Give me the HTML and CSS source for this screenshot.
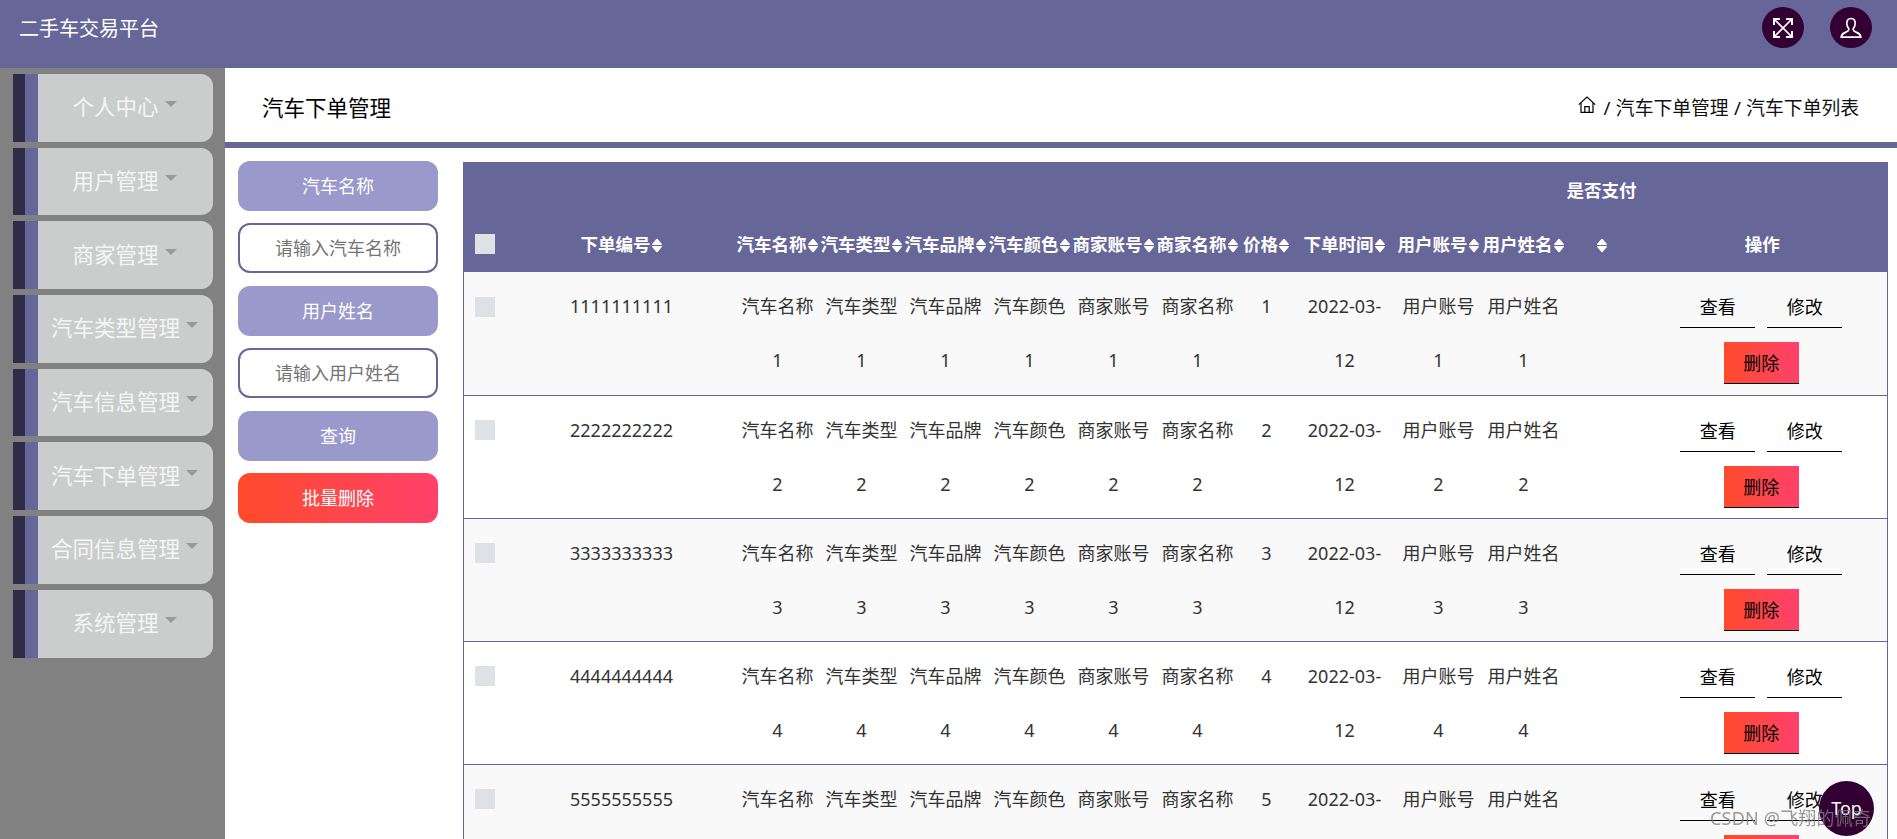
FILE: index.html
```html
<!DOCTYPE html>
<html lang="zh-CN">
<head>
    <meta charset="UTF-8">
    <title>二手车交易平台</title>
    <link rel="stylesheet" href="styles.css">
</head>
<body>
    <svg class="defs" aria-hidden="true">
        <symbol id="sort" viewBox="0 0 12 15">
            <path d="M1 6.2 L5.3 1 Q6 .4 6.7 1 L11 6.2 Q11.4 7 10.4 7 H1.6 Q.6 7 1 6.2Z"/>
            <path d="M1 8.8 L5.3 14 Q6 14.6 6.7 14 L11 8.8 Q11.4 8 10.4 8 H1.6 Q.6 8 1 8.8Z"/>
        </symbol>
    </svg>

    <!-- 顶部 -->
    <header class="topbar">
        <div class="site-title">二手车交易平台</div>
        <div class="top-btns">
            <a class="round-btn">
                <svg viewBox="0 0 20 20" width="20" height="20" fill="none" stroke="#fff" stroke-width="1.7">
                    <path d="M1.5 1.5 L18.5 18.5 M18.5 1.5 L1.5 18.5"/>
                    <path d="M1 7 V1 H7 M13 1 H19 V7 M19 13 V19 H13 M7 19 H1 V13" stroke-width="2"/>
                </svg>
            </a>
            <a class="round-btn">
                <svg viewBox="0 0 22 22" width="22" height="22" fill="none" stroke="#fff" stroke-width="1.7">
                    <path d="M11 1.5 C7.8 1.5 6.6 4 6.8 6.8 C7 9.2 8 10.8 8.8 11.8 C9.2 13.4 7.6 14.6 5 15.6 C2.8 16.4 1.5 17.6 1.2 20.2 H20.8 C20.5 17.6 19.2 16.4 17 15.6 C14.4 14.6 12.8 13.4 13.2 11.8 C14 10.8 15 9.2 15.2 6.8 C15.4 4 14.2 1.5 11 1.5Z"/>
                </svg>
            </a>
        </div>
    </header>

    <div class="layout">
        <!-- 左侧菜单 -->
        <aside class="sidebar">
            <div class="menu-item"><span class="menu-text">个人中心</span><i class="caret"></i></div>
            <div class="menu-item"><span class="menu-text">用户管理</span><i class="caret"></i></div>
            <div class="menu-item"><span class="menu-text">商家管理</span><i class="caret"></i></div>
            <div class="menu-item"><span class="menu-text">汽车类型管理</span><i class="caret"></i></div>
            <div class="menu-item"><span class="menu-text">汽车信息管理</span><i class="caret"></i></div>
            <div class="menu-item"><span class="menu-text">汽车下单管理</span><i class="caret"></i></div>
            <div class="menu-item"><span class="menu-text">合同信息管理</span><i class="caret"></i></div>
            <div class="menu-item"><span class="menu-text">系统管理</span><i class="caret"></i></div>
        </aside>

        <main class="main">
            <div class="crumb-bar">
                <div class="page-title">汽车下单管理</div>
                <div class="crumbs">
                    <svg class="home" viewBox="0 0 18 18" width="18" height="18" fill="none" stroke="#000" stroke-width="1.2">
                        <path d="M.8 8.6 L9 1 L17.2 8.6"/>
                        <path d="M3 7 V16.4 H15 V7"/>
                        <path d="M6.8 16.4 V10.6 H11.2 V16.4"/>
                    </svg>
                    <span>/ 汽车下单管理 / 汽车下单列表</span>
                </div>
            </div>

            <div class="content">
                <!-- 查询条件 -->
                <div class="search">
                    <div class="search-btn">汽车名称</div>
                    <input class="search-input" type="text" placeholder="请输入汽车名称">
                    <div class="search-btn">用户姓名</div>
                    <input class="search-input" type="text" placeholder="请输入用户姓名">
                    <div class="search-btn">查询</div>
                    <div class="search-btn danger">批量删除</div>
                </div>

                <!-- 列表 -->
                <table class="list">
                    <colgroup>
                        <col class="c-check"><col class="c-no">
                        <col class="c-84"><col class="c-84"><col class="c-84"><col class="c-84"><col class="c-84"><col class="c-84">
                        <col class="c-price"><col class="c-time"><col class="c-user"><col class="c-84"><col class="c-pay"><col class="c-op">
                    </colgroup>
                    <thead>
                        <tr>
                            <th class="check-cell"><i class="check"></i></th>
                            <th>下单编号<svg class="sort"><use href="#sort"/></svg></th>
                            <th>汽车名称<svg class="sort"><use href="#sort"/></svg></th>
                            <th>汽车类型<svg class="sort"><use href="#sort"/></svg></th>
                            <th>汽车品牌<svg class="sort"><use href="#sort"/></svg></th>
                            <th>汽车颜色<svg class="sort"><use href="#sort"/></svg></th>
                            <th>商家账号<svg class="sort"><use href="#sort"/></svg></th>
                            <th>商家名称<svg class="sort"><use href="#sort"/></svg></th>
                            <th>价格<svg class="sort"><use href="#sort"/></svg></th>
                            <th>下单时间<svg class="sort"><use href="#sort"/></svg></th>
                            <th>用户账号<svg class="sort"><use href="#sort"/></svg></th>
                            <th>用户姓名<svg class="sort"><use href="#sort"/></svg></th>
                            <th class="pay">是否支付<br><svg class="sort"><use href="#sort"/></svg></th>
                            <th>操作</th>
                        </tr>
                    </thead>
                    <tbody>
                        <tr>
                            <td class="check-cell"><i class="check"></i></td>
                            <td>1111111111</td>
                            <td>汽车名称<br>1</td><td>汽车类型<br>1</td><td>汽车品牌<br>1</td><td>汽车颜色<br>1</td>
                            <td>商家账号<br>1</td><td>商家名称<br>1</td><td>1</td><td>2022-03-<br>12</td>
                            <td>用户账号<br>1</td><td>用户姓名<br>1</td><td></td>
                            <td class="ops"><div class="op-list"><a class="op">查看</a><a class="op">修改</a><a class="op del">删除</a></div></td>
                        </tr>
                        <tr>
                            <td class="check-cell"><i class="check"></i></td>
                            <td>2222222222</td>
                            <td>汽车名称<br>2</td><td>汽车类型<br>2</td><td>汽车品牌<br>2</td><td>汽车颜色<br>2</td>
                            <td>商家账号<br>2</td><td>商家名称<br>2</td><td>2</td><td>2022-03-<br>12</td>
                            <td>用户账号<br>2</td><td>用户姓名<br>2</td><td></td>
                            <td class="ops"><div class="op-list"><a class="op">查看</a><a class="op">修改</a><a class="op del">删除</a></div></td>
                        </tr>
                        <tr>
                            <td class="check-cell"><i class="check"></i></td>
                            <td>3333333333</td>
                            <td>汽车名称<br>3</td><td>汽车类型<br>3</td><td>汽车品牌<br>3</td><td>汽车颜色<br>3</td>
                            <td>商家账号<br>3</td><td>商家名称<br>3</td><td>3</td><td>2022-03-<br>12</td>
                            <td>用户账号<br>3</td><td>用户姓名<br>3</td><td></td>
                            <td class="ops"><div class="op-list"><a class="op">查看</a><a class="op">修改</a><a class="op del">删除</a></div></td>
                        </tr>
                        <tr>
                            <td class="check-cell"><i class="check"></i></td>
                            <td>4444444444</td>
                            <td>汽车名称<br>4</td><td>汽车类型<br>4</td><td>汽车品牌<br>4</td><td>汽车颜色<br>4</td>
                            <td>商家账号<br>4</td><td>商家名称<br>4</td><td>4</td><td>2022-03-<br>12</td>
                            <td>用户账号<br>4</td><td>用户姓名<br>4</td><td></td>
                            <td class="ops"><div class="op-list"><a class="op">查看</a><a class="op">修改</a><a class="op del">删除</a></div></td>
                        </tr>
                        <tr>
                            <td class="check-cell"><i class="check"></i></td>
                            <td>5555555555</td>
                            <td>汽车名称<br>5</td><td>汽车类型<br>5</td><td>汽车品牌<br>5</td><td>汽车颜色<br>5</td>
                            <td>商家账号<br>5</td><td>商家名称<br>5</td><td>5</td><td>2022-03-<br>12</td>
                            <td>用户账号<br>5</td><td>用户姓名<br>5</td><td></td>
                            <td class="ops"><div class="op-list"><a class="op">查看</a><a class="op">修改</a><a class="op del">删除</a></div></td>
                        </tr>
                    </tbody>
                </table>
            </div>
        </main>
    </div>

    <a class="to-top">Top</a>
    <div class="watermark">CSDN @飞翔的佩奇</div>
</body>
</html>
```

FILE: styles.css
```css
*{
    margin: 0;
    padding: 0;
    box-sizing: border-box;
}
html,body{
    height: 100%;
    overflow: hidden;
}
body{
    font-family: "Noto Sans", "Noto Sans CJK SC", sans-serif;
    font-size: 18px;
    color: #333;
    background-color: #fff;
}
.defs{
    display: none;
}

/* 顶部 */
.topbar{
    height: 68px;
    background-color: #666699;
    display: flex;
    justify-content: space-between;
    padding: 7px 25px 0 19px;
}
.site-title{
    color: #fff;
    font-size: 20px;
    line-height: 44px;
}
.top-btns{
    display: flex;
    gap: 26px;
}
.round-btn{
    width: 42px;
    height: 41px;
    border-radius: 50%;
    background-color: #330033;
    display: flex;
    align-items: center;
    justify-content: center;
}

.layout{
    display: flex;
    height: 771px;
}

/* 左侧菜单 */
.sidebar{
    width: 225px;
    flex-shrink: 0;
    background-color: #808180;
    padding: 6px 12px 0 13px;
    display: flex;
    flex-direction: column;
    gap: 6px;
}
.menu-item{
    height: 67.7px;
    display: flex;
    align-items: center;
    justify-content: center;
    gap: 6px;
    padding-left: 11px;
    padding-bottom: 4px;
    background-color: #cbcdcc;
    border-left: 12px solid #2e2d47;
    border-radius: 0 12px 12px 0;
    position: relative;
}
.menu-item::before{
    content: "";
    position: absolute;
    left: 0;
    top: 0;
    bottom: 0;
    width: 13px;
    background-color: #666699;
}
.menu-text{
    color: #f5f5f5;
    font-size: 21.5px;
}
.caret{
    width: 0;
    height: 0;
    border-left: 6px solid transparent;
    border-right: 6px solid transparent;
    border-top: 6px solid #999;
    margin-bottom: 3px;
}

.main{
    flex: 1;
    min-width: 0;
}
.crumb-bar{
    height: 80px;
    border-bottom: 6px solid #666699;
    display: flex;
    justify-content: space-between;
    align-items: center;
    padding: 3px 38px 0 37px;
}
.page-title{
    font-size: 21.5px;
    color: #000;
}
.crumbs{
    display: flex;
    align-items: center;
    gap: 8px;
    font-size: 18.8px;
    word-spacing: 0.5px;
    color: #111;
}
.home{
    margin-bottom: 4px;
}

.content{
    display: flex;
    gap: 25px;
    padding: 13px 10px 0 13px;
}

/* 查询 */
.search{
    width: 200px;
    flex-shrink: 0;
    display: flex;
    flex-direction: column;
    gap: 12.4px;
}
.search-btn{
    height: 50px;
    line-height: 50px;
    text-align: center;
    color: #fff;
    background-color: #9999cc;
    border-radius: 12px;
}
.search-btn.danger{
    background: linear-gradient(to right, #ff4b2b, #ff416c);
}
.search-input{
    height: 50px;
    border: 2px solid #666699;
    border-radius: 12px;
    text-align: center;
    font: inherit;
    outline: none;
}
.search-input::placeholder{
    color: #757575;
}

/* 列表 */
.list{
    width: 1424px;
    flex-shrink: 0;
    table-layout: fixed;
    border-collapse: collapse;
    border-left: 1px solid #666699;
    border-right: 1px solid #666699;
    margin-top: 1px;
    line-height: 54px;
}
.c-check{ width: 44px; }
.c-no{ width: 228px; }
.c-84{ width: 84px; }
.c-price{ width: 54px; }
.c-time{ width: 102px; }
.c-user{ width: 86px; }
.c-pay{ width: 72px; }
.c-op{ width: 250px; }

.list th{
    height: 110px;
    background-color: #666699;
    color: #fff;
    font-size: 17.5px;
    font-weight: bold;
    vertical-align: bottom;
    padding-bottom: 1px;
}
.list td{
    height: 123px;
    text-align: center;
    vertical-align: top;
    padding-top: 7px;
    border-bottom: 1px solid #666699;
}
.list tbody tr:nth-child(odd){
    background-color: #f9f9f9;
}
.list .check-cell{
    text-align: left;
    padding-left: 11px;
}
.check{
    display: inline-block;
    width: 20px;
    height: 20px;
    margin-bottom: 3px;
    background-color: #dee1e6;
    vertical-align: middle;
}
th .check{
    margin-bottom: 5px;
}
.sort{
    width: 12px;
    height: 15px;
    fill: #fff;
    vertical-align: -2px;
}
.list .ops{
    padding-top: 14px;
}
.op-list{
    display: flex;
    flex-wrap: wrap;
    justify-content: center;
    gap: 14px 12px;
    padding-right: 2px;
}
.op{
    width: 75px;
    height: 42px;
    line-height: 42px;
    color: #000;
    border-bottom: 1px solid #000;
}
.del{
    background: linear-gradient(to right, #ff4b2b, #ff416c);
}

/* 返回顶部 */
.to-top{
    position: fixed;
    left: 1819px;
    top: 781px;
    width: 55px;
    height: 55px;
    line-height: 55px;
    border-radius: 50%;
    text-align: center;
    color: #fff;
    background-color: #330033;
}
.watermark{
    position: fixed;
    left: 1710px;
    top: 806px;
    font-size: 18px;
    line-height: 24px;
    white-space: nowrap;
    color: rgba(128, 128, 128, 0.8);
    letter-spacing: 0.2px;
}
```
